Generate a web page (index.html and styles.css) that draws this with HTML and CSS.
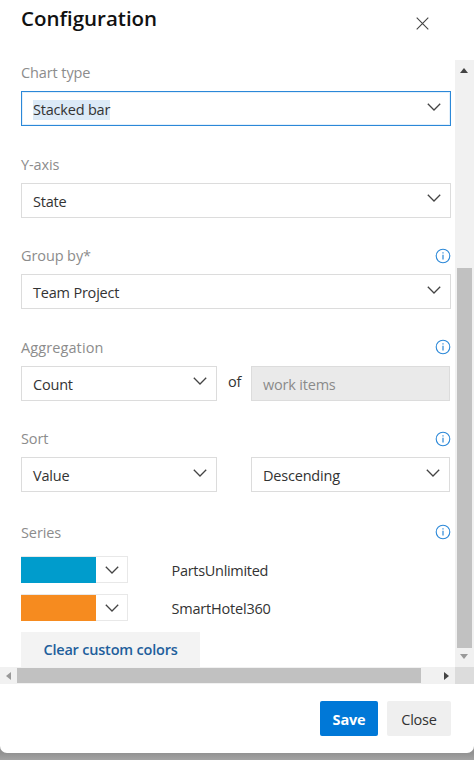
FILE: index.html
```html
<!DOCTYPE html>
<html lang="en">
<head>
    <meta charset="UTF-8">
    <meta name="viewport" content="width=device-width, initial-scale=1.0">
    <title>Configuration</title>
    <link rel="stylesheet" href="styles.css">
</head>
<body>
    <svg class="defs" width="0" height="0">
        <symbol id="chevron" viewBox="0 0 14 8"><path d="M.8 .8L7 7L13.2 .8" fill="none" stroke="#444" stroke-width="1.3"/></symbol>
        <symbol id="info" viewBox="0 0 16 16">
            <circle cx="8" cy="8" r="6.8" fill="none" stroke="#2b88d8" stroke-width="1.1"/>
            <path d="M8 6.7V11.5M8 4.3V5.5" stroke="#2b88d8" stroke-width="1.2"/>
        </symbol>
    </svg>
    <div class="dialog">
        <header>
            <h1>Configuration</h1>
            <svg class="close-icon" viewBox="0 0 13 13"><path d="M.7 .7L12.3 12.3M12.3 .7L.7 12.3" stroke="#444" stroke-width="1.1"/></svg>
        </header>
        <div class="content">
            <form class="form">
                <div class="field">
                    <div class="label"><span>Chart type</span></div>
                    <div class="select active"><span class="selected">Stacked bar</span><svg class="chevron"><use href="#chevron"/></svg></div>
                </div>
                <div class="field">
                    <div class="label"><span>Y-axis</span></div>
                    <div class="select"><span>State</span><svg class="chevron"><use href="#chevron"/></svg></div>
                </div>
                <div class="field">
                    <div class="label"><span>Group by*</span><svg class="info"><use href="#info"/></svg></div>
                    <div class="select"><span>Team Project</span><svg class="chevron"><use href="#chevron"/></svg></div>
                </div>
                <div class="field">
                    <div class="label"><span class="wide">Aggregation</span><svg class="info"><use href="#info"/></svg></div>
                    <div class="pair">
                        <div class="select"><span>Count</span><svg class="chevron"><use href="#chevron"/></svg></div>
                        <span class="of">of</span>
                        <div class="select disabled"><span>work items</span></div>
                    </div>
                </div>
                <div class="field">
                    <div class="label"><span>Sort</span><svg class="info"><use href="#info"/></svg></div>
                    <div class="pair">
                        <div class="select"><span>Value</span><svg class="chevron"><use href="#chevron"/></svg></div>
                        <span class="of"></span>
                        <div class="select"><span>Descending</span><svg class="chevron"><use href="#chevron"/></svg></div>
                    </div>
                </div>
                <div class="series">
                    <div class="label"><span>Series</span><svg class="info"><use href="#info"/></svg></div>
                    <div class="series-row">
                        <div class="picker"><div class="color blue"></div><svg class="chevron"><use href="#chevron"/></svg></div>
                        <span class="narrow">PartsUnlimited</span>
                    </div>
                    <div class="series-row">
                        <div class="picker"><div class="color orange"></div><svg class="chevron"><use href="#chevron"/></svg></div>
                        <span>SmartHotel360</span>
                    </div>
                    <div class="clear">Clear custom colors</div>
                </div>
            </form>
            <div class="scroll-y">
                <svg class="arrow-up" viewBox="0 0 8 5"><path d="M0 5L4 0L8 5Z" fill="#444"/></svg>
                <div class="thumb-y"></div>
                <svg class="arrow-down" viewBox="0 0 8 5"><path d="M0 0L4 5L8 0Z" fill="#999"/></svg>
            </div>
            <div class="scroll-x">
                <svg class="arrow-left" viewBox="0 0 5 8"><path d="M5 0L0 4L5 8Z" fill="#999"/></svg>
                <div class="thumb-x"></div>
                <svg class="arrow-right" viewBox="0 0 5 8"><path d="M0 0L5 4L0 8Z" fill="#444"/></svg>
            </div>
            <div class="corner"></div>
        </div>
        <footer>
            <div class="btn primary">Save</div>
            <div class="btn">Close</div>
        </footer>
    </div>
</body>
</html>
```
FILE: styles.css
```css
* {
    box-sizing: border-box;
}
body {
    margin: 0;
    height: 760px;
    overflow: hidden;
    background: linear-gradient(#929292 753px, #a3a3a3 760px);
    font-family: 'Open Sans', 'Noto Sans', sans-serif;
    font-size: 14.5px;
    letter-spacing: -0.2px;
    color: #333;
}
.defs {
    display: none;
}
svg {
    flex: none;
    display: block;
}
.dialog {
    height: 753px;
    background: white;
    border-radius: 0 0 7px 7px;
    overflow: hidden;
}
header {
    height: 60px;
    display: flex;
    justify-content: space-between;
    padding: 0 45px 0 21px;
}
h1 {
    margin: 3px 0 0;
    font-size: 20.5px;
    line-height: 30px;
    font-weight: 600;
    letter-spacing: 0;
    color: #111;
}
.close-icon {
    width: 13px;
    height: 13px;
    margin-top: 17px;
}
.content {
    display: grid;
    grid-template-columns: 455px 19px;
    grid-template-rows: 607px 17px;
}
.form {
    padding-left: 21px;
    overflow: hidden;
}
.field {
    width: 430px;
    height: 91.5px;
}
.label {
    height: 31px;
    display: flex;
    justify-content: space-between;
    line-height: 25px;
    letter-spacing: -0.1px;
    color: #8c8c8c;
}
.wide {
    letter-spacing: 0.1px;
}
.narrow {
    letter-spacing: -0.3px;
}
.info {
    width: 16px;
    height: 16px;
    margin-top: 4.5px;
}
.select {
    height: 35px;
    border: 1px solid #dcdcdc;
    display: flex;
    align-items: center;
    justify-content: space-between;
    padding: 2px 9px 0 11px;
}
.active {
    border-color: #2b88d8;
    box-shadow: inset 0 0 0 1px #e3f0fb;
}
.selected {
    background: #dceaf7;
    line-height: 20px;
}
.chevron {
    width: 14px;
    height: 8px;
}
.select .chevron {
    margin-top: -6px;
}
.pair {
    display: grid;
    grid-template-columns: 196px 34px 199px;
}
.of {
    padding-left: 11px;
    line-height: 32px;
}
.disabled {
    background: #eaeaea;
    color: #8a8a8a;
}
.series {
    width: 430px;
    padding-top: 2px;
}
.series .label {
    height: 36.5px;
}
.series-row {
    height: 38px;
    display: flex;
    align-items: flex-start;
    line-height: 30px;
}
.picker {
    width: 107px;
    height: 27px;
    margin-right: 43.5px;
    border: 1px solid #e8e8e8;
    border-left: none;
    display: flex;
    align-items: center;
}
.color {
    width: 75px;
    height: 26px;
    margin-right: 9px;
}
.blue {
    background: #009ccc;
}
.orange {
    background: #f68b1f;
}
.clear {
    width: 179px;
    height: 36px;
    background: #f3f3f3;
    color: #1f5f9c;
    font-weight: 600;
    line-height: 36px;
    text-align: center;
}
.scroll-y {
    background: #f1f1f1;
    display: flex;
    flex-direction: column;
    padding-left: 2px;
}
.arrow-up {
    width: 8px;
    height: 5px;
    margin: 8px 0 0 3px;
}
.thumb-y {
    width: 15px;
    height: 380px;
    margin-top: 195px;
    background: #c1c1c1;
}
.arrow-down {
    width: 8px;
    height: 5px;
    margin: 6px 0 0 3px;
}
.scroll-x {
    background: #f1f1f1;
    display: flex;
    align-items: center;
}
.arrow-left {
    width: 5px;
    height: 8px;
    margin-left: 6px;
}
.thumb-x {
    width: 404px;
    height: 15px;
    margin-left: 6px;
    background: #c1c1c1;
}
.arrow-right {
    width: 5px;
    height: 8px;
    margin-left: 23px;
}
.corner {
    background: #dcdcdc;
}
footer {
    display: flex;
    justify-content: flex-end;
    gap: 9px;
    padding: 17px 23px 0 0;
}
.btn {
    width: 64px;
    height: 35px;
    border-radius: 2px;
    background: #efefef;
    line-height: 37px;
    text-align: center;
}
.primary {
    width: 58px;
    background: #0078d7;
    color: white;
    font-weight: 700;
}
```
